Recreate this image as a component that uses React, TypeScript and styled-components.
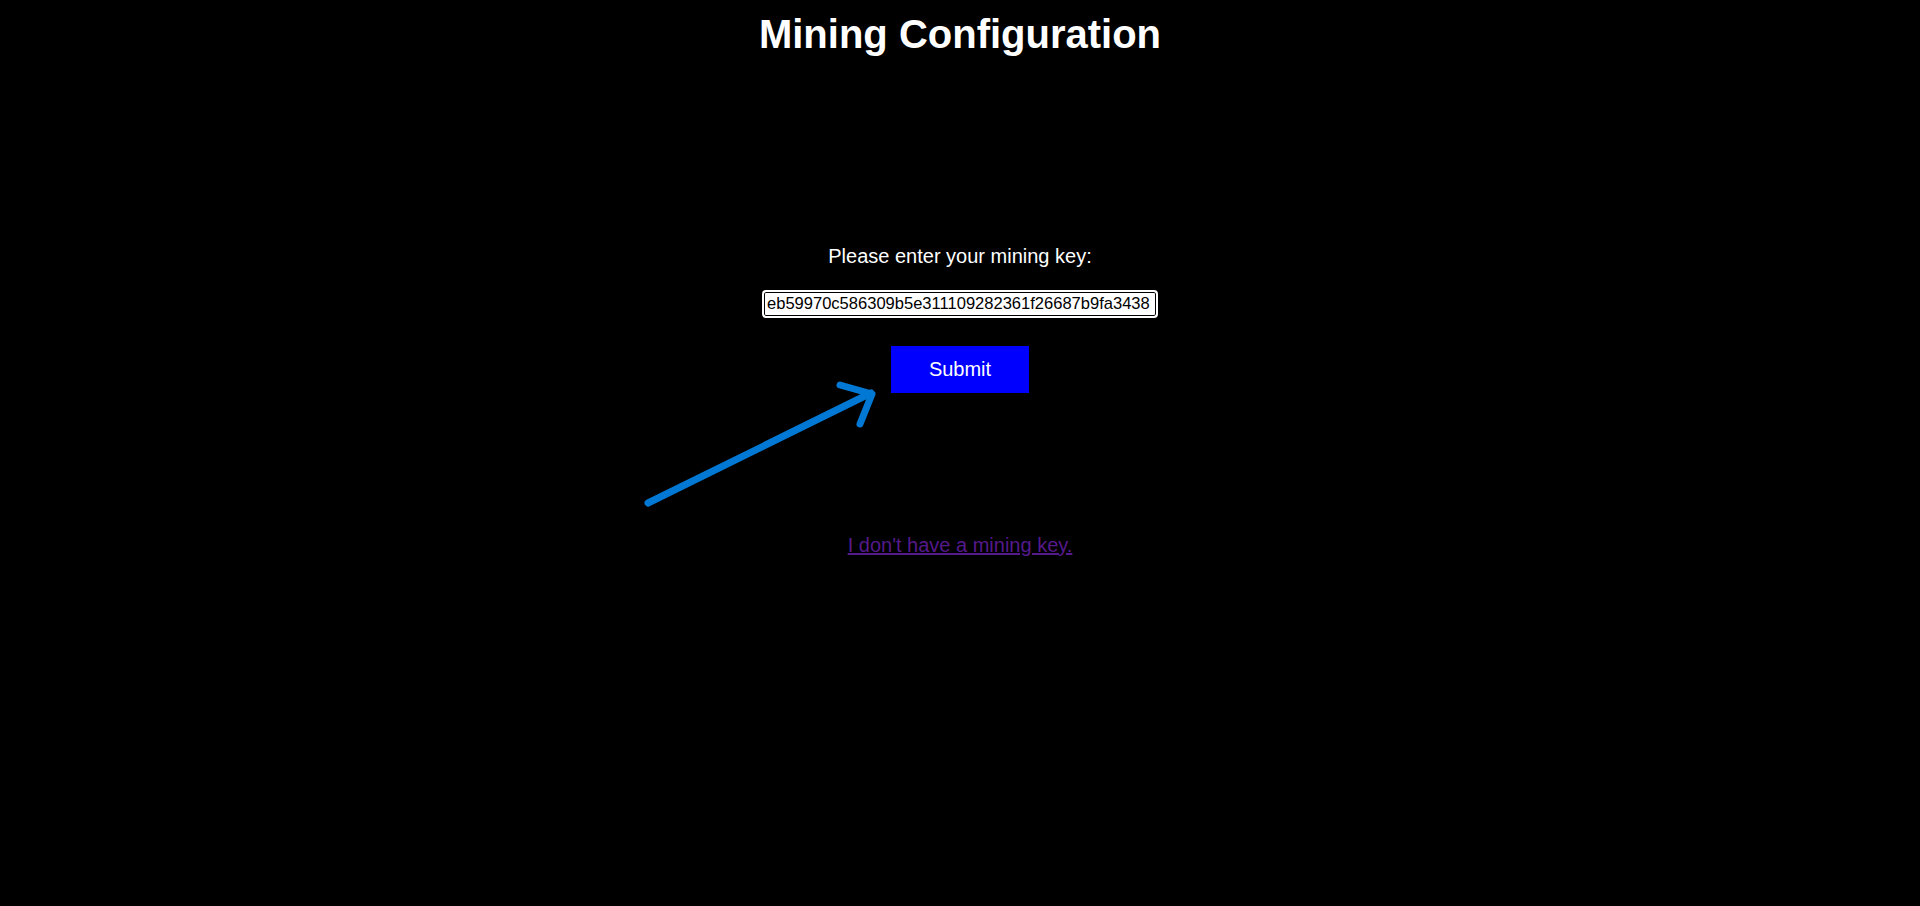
import React from "react";
import styled, { createGlobalStyle } from "styled-components";

const GlobalStyle = createGlobalStyle`
  html, body {
    margin: 0;
    padding: 0;
    background: #000;
  }
  body {
    font-family: "Liberation Sans", Arial, sans-serif;
    color: #fff;
    min-height: 906px;
  }
`;

const Page = styled.main`
  position: relative;
  min-height: 906px;
  display: flex;
  flex-direction: column;
  align-items: center;
  background: #000;
`;

const Title = styled.h1`
  margin: 11px 0 0;
  font-size: 40px;
  line-height: 46px;
  font-weight: 700;
  color: #fff;
`;

const Form = styled.form`
  display: flex;
  flex-direction: column;
  align-items: center;
  margin-top: 188px;
`;

const Label = styled.label`
  font-size: 20px;
  line-height: 23px;
  color: #fff;
`;

const KeyInput = styled.input`
  box-sizing: border-box;
  margin-top: 22px;
  width: 396px;
  height: 28px;
  padding: 0 0 0 3px;
  border: 2px solid #fff;
  border-radius: 4px;
  box-shadow: inset 0 0 0 1px #000;
  background: #fff;
  color: #000;
  font-family: "Liberation Sans", Arial, sans-serif;
  font-size: 16.55px;
  outline: none;
`;

const SubmitButton = styled.button`
  margin-top: 28px;
  width: 138px;
  height: 47px;
  border: none;
  background: #0000ff;
  color: #fff;
  font-family: "Liberation Sans", Arial, sans-serif;
  font-size: 20px;
  cursor: pointer;
`;

const NoKeyLink = styled.a`
  margin-top: 141px;
  font-size: 20px;
  line-height: 23px;
  color: #551a8b;
  text-decoration: underline;
`;

const ArrowSvg = styled.svg`
  position: absolute;
  left: 0;
  top: 0;
  pointer-events: none;
`;

export default function App() {
  return (
    <>
      <GlobalStyle />
      <Page>
        <Title>Mining Configuration</Title>
        <Form onSubmit={(e) => e.preventDefault()}>
          <Label htmlFor="key">Please enter your mining key:</Label>
          <KeyInput
            id="key"
            type="text"
            defaultValue="eb59970c586309b5e311109282361f26687b9fa3438"
          />
          <SubmitButton type="submit">Submit</SubmitButton>
        </Form>
        <NoKeyLink href="#">I don't have a mining key.</NoKeyLink>
        <ArrowSvg width="1920" height="906" viewBox="0 0 1920 906">
          <g
            fill="none"
            stroke="#0078d4"
            strokeWidth="7"
            strokeLinecap="round"
            strokeLinejoin="round"
          >
            <path d="M648 503 L871 393" />
            <path d="M840 385 L872 394 L860 424" />
          </g>
        </ArrowSvg>
      </Page>
    </>
  );
}
